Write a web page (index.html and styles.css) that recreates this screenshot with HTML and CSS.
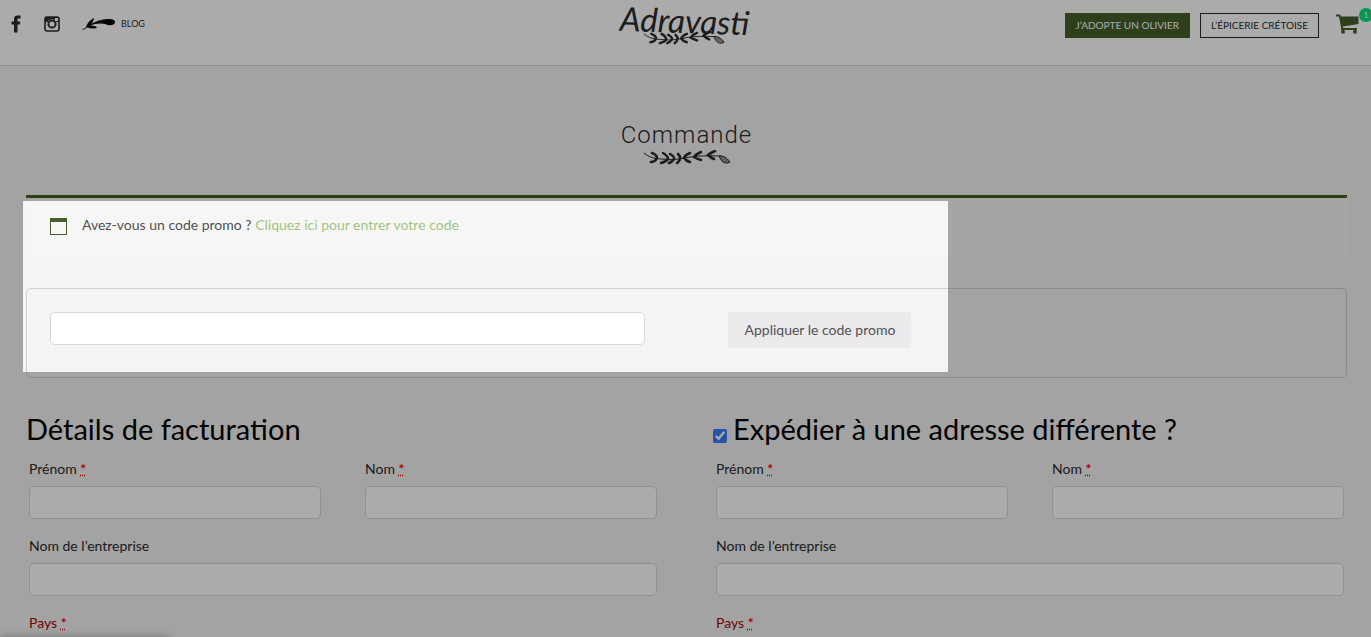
FILE: index.html
```
<!DOCTYPE html>
<html lang="fr">
<head>
  <meta charset="UTF-8">
  <meta name="viewport" content="width=device-width, initial-scale=1.0">
  <title>Commande - Adravasti</title>
  <link rel="stylesheet" href="styles.css">
</head>
<body>
  <svg class="sprite" aria-hidden="true">
    <symbol id="branch" viewBox="0 0 88 16">
      <path d="M1 3 Q8 9 18 9 Q30 11 42 8 T78 6" fill="none" stroke="currentColor" stroke-width="1"/>
      <g fill="none" stroke="currentColor" stroke-width="2.600" stroke-linecap="round">
        <path d="M9 3 Q14 5 14 8 Q12 12 8 12"/>
        <path d="M20 3 Q25 6 25 9 Q23 12 18 13"/>
        <path d="M27 4 Q32 7 31 9 Q29 12 26 13"/>
        <path d="M35 4 Q38 7 37 9 Q36 12 34 13"/>
        <path d="M47 3 Q42 5 41 8 Q43 11 47 12"/>
        <path d="M58 2 Q53 4 51 7 Q54 9 58 10"/>
        <path d="M72 1 Q67 3 65 5 Q68 8 71 9"/>
      </g>
      <path d="M76 6 Q82 5 87 12 Q82 15 78 10 Z" fill="currentColor" fill-opacity="0.5" stroke="currentColor"/>
    </symbol>
  </svg>

  <header class="header">
    <nav class="header-left">
      <a class="icon-link" href="#" aria-label="Facebook">
        <svg width="10" height="18" viewBox="0 0 10 18"><path d="M9.500 0.500V3.500H7.500Q6.500 3.500 6.500 4.500V6.500H9.300L9 9.500H6.500V17.500H3V9.500H0.500V6.500H3V4Q3 0.500 6.500 0.500Z" fill="currentColor"/></svg>
      </a>
      <a class="icon-link" href="#" aria-label="Instagram">
        <svg width="16" height="16" viewBox="0 0 16 16">
          <rect x="1" y="1" width="14" height="14" rx="2" fill="none" stroke="currentColor" stroke-width="1.600"/>
          <path d="M1 1H15V6H1Z" fill="currentColor"/>
          <rect x="11" y="2" width="3" height="3" fill="#fff"/>
          <circle cx="8" cy="8" r="4.800" fill="#fff"/>
          <circle cx="8" cy="8" r="3.600" fill="#fff" stroke="currentColor" stroke-width="2"/>
        </svg>
      </a>
      <a class="blog-link" href="#">
        <svg width="35" height="13" viewBox="0 0 35 13">
          <path d="M0.500 12Q6 9 8 7Q18 1 27 1Q35 1 34 5Q32 8 27 7Q18 4 9 7.500Q15 7 16 10Q12 11 6 9.500Q3 12 0.500 12Z" fill="#000"/>
          <path d="M5 9Q7 3 13 0Q13 5 6 9Z" fill="#000"/>
        </svg>
        BLOG
      </a>
    </nav>

    <a class="logo" href="#">
      <span class="logo-name">Adravasti</span>
      <svg class="logo-branch" width="82" height="15"><use href="#branch"/></svg>
    </a>

    <div class="header-right">
      <a class="btn btn-green" href="#">J’ADOPTE UN OLIVIER</a>
      <a class="btn btn-outline" href="#">L’ÉPICERIE CRÉTOISE</a>
      <a class="cart" href="#" aria-label="Panier">
        <svg width="23" height="20" viewBox="0 0 23 20">
          <path d="M0 0.500H4L5 2.500H22.500V10L7 12.500V14H21V16H5V13L3 2.500H0Z" fill="currentColor"/>
          <circle cx="7" cy="17.800" r="2" fill="currentColor"/>
          <circle cx="19" cy="17.800" r="2" fill="currentColor"/>
        </svg>
        <span class="cart-count">1</span>
      </a>
    </div>
  </header>

  <main class="checkout">
    <div class="page-title">
      <h1>Commande</h1>
      <svg width="88" height="16"><use href="#branch"/></svg>
    </div>

    <section class="coupon">
      <div class="notice">
        <svg width="17" height="17" viewBox="0 0 17 17">
          <rect x="0.500" y="0.500" width="16" height="16" fill="none" stroke="currentColor"/>
          <rect width="17" height="4" fill="currentColor"/>
        </svg>
        <p>Avez-vous un code promo ? <a href="#">Cliquez ici pour entrer votre code</a></p>
      </div>
      <form class="coupon-form">
        <input type="text" class="input-text" aria-label="Code promo">
        <button type="button" class="coupon-btn">Appliquer le code promo</button>
      </form>
      <div class="spotlight"></div>
    </section>

    <form class="columns">
      <section>
        <h3>Détails de facturation</h3>
        <div class="fields">
          <p class="field">
            <label for="b-first">Prénom <abbr title="obligatoire">*</abbr></label>
            <input type="text" class="input-text" id="b-first">
          </p>
          <p class="field">
            <label for="b-last">Nom <abbr title="obligatoire">*</abbr></label>
            <input type="text" class="input-text" id="b-last">
          </p>
          <p class="field wide">
            <label for="b-company">Nom de l’entreprise</label>
            <input type="text" class="input-text" id="b-company">
          </p>
          <p class="field wide invalid">
            <span>Pays <abbr title="obligatoire">*</abbr></span>
          </p>
        </div>
      </section>
      <section>
        <h3>
          <input type="checkbox" id="ship" checked>
          <label for="ship">Expédier à une adresse différente ?</label>
        </h3>
        <div class="fields">
          <p class="field">
            <label for="s-first">Prénom <abbr title="obligatoire">*</abbr></label>
            <input type="text" class="input-text" id="s-first">
          </p>
          <p class="field">
            <label for="s-last">Nom <abbr title="obligatoire">*</abbr></label>
            <input type="text" class="input-text" id="s-last">
          </p>
          <p class="field wide">
            <label for="s-company">Nom de l’entreprise</label>
            <input type="text" class="input-text" id="s-company">
          </p>
          <p class="field wide invalid">
            <span>Pays <abbr title="obligatoire">*</abbr></span>
          </p>
        </div>
      </section>
    </form>
  </main>
  <div class="corner-shadow"></div>
</body>
</html>
```
FILE: styles.css
```
:root {
  --green: #455e2b;
  --text: #2b2b2b;
}
* {
  box-sizing: border-box;
}
body {
  margin: 0;
  min-height: 100vh;
  background: #f4f4f4;
  color: var(--text);
  font-family: Lato, "Liberation Sans", sans-serif;
  font-size: 14px;
  line-height: 20px;
  overflow: hidden auto;
}
a {
  color: inherit;
  text-decoration: none;
}
h1, h3, p {
  margin: 0;
  font-weight: 400;
}
svg {
  display: block;
}
.sprite {
  position: absolute;
  width: 0;
  height: 0;
}

/* header */
.header {
  display: grid;
  grid-template-columns: 1fr auto 1fr;
  align-items: start;
  height: 66px;
  padding: 0 12px 0 11px;
  background: #fff;
  border-bottom: 1px solid #d8d8d8;
}
.header-left {
  display: flex;
  align-items: center;
  height: 48px;
}
.icon-link {
  margin-right: 23px;
}
.icon-link + .icon-link {
  margin-right: 21px;
}
.blog-link {
  display: flex;
  align-items: center;
  gap: 5px;
  font-size: 9px;
}
.logo {
  padding-top: 4px;
}
.logo-name {
  display: block;
  font-size: 33px;
  font-style: italic;
  line-height: 32px;
  transform: rotate(2deg);
}
.logo-branch {
  margin: -5px 0 0 23px;
}
.header-right {
  display: flex;
  justify-content: flex-end;
  padding-top: 13px;
}
.btn {
  height: 25px;
  margin-right: 10px;
  padding: 0 10px;
  border: 1px solid var(--green);
  font-size: 10px;
  line-height: 23px;
}
.btn-green {
  background: var(--green);
  color: #fff;
}
.btn-outline {
  margin-right: 17px;
  border-color: var(--text);
}
.cart {
  position: relative;
  padding-top: 1px;
  color: var(--green);
}
.cart-count {
  position: absolute;
  top: -5px;
  right: -14px;
  width: 14px;
  height: 14px;
  border-radius: 50%;
  background: #00e07f;
  color: #fff;
  font-size: 8px;
  line-height: 14px;
  text-align: center;
}

/* checkout */
.checkout {
  padding: 54px 24px 0 26px;
}
.page-title {
  display: flex;
  flex-direction: column;
  align-items: center;
  height: 75px;
}
.page-title h1 {
  font-family: Roboto, "Liberation Sans", sans-serif;
  font-size: 24px;
  font-weight: 300;
  letter-spacing: 1px;
  line-height: 30px;
}
.coupon {
  position: relative;
}
.notice {
  display: flex;
  align-items: center;
  gap: 15px;
  height: 61px;
  padding: 0 24px 4px;
  border-top: 3px solid var(--green);
  background: #f7f6f7;
  color: #515151;
}
.notice svg {
  margin-top: 3px;
  color: var(--green);
}
.notice a {
  color: #9fc680;
}
.coupon-form {
  display: grid;
  grid-template-columns: 47% auto;
  justify-content: start;
  align-items: start;
  gap: 83px;
  height: 90px;
  margin-top: 32px;
  padding: 23px 29px 23px 23px;
  border: 1px solid #d3ced2;
  border-radius: 5px;
}
.input-text {
  display: block;
  width: 100%;
  height: 33px;
  padding: 0 8px;
  border: 1px solid #d8d8d8;
  border-radius: 5px;
  background: #fff;
  font: inherit;
}
.coupon-btn {
  height: 36px;
  padding: 0 16px;
  border: 0;
  border-radius: 3px;
  background: #ebe9eb;
  color: #515151;
  font: inherit;
}
/* everything outside the promo code area is dimmed */
.spotlight {
  position: absolute;
  top: 6px;
  bottom: 6px;
  left: -3px;
  width: 70%;
  box-shadow: 0 0 0 9999px rgba(0, 0, 0, 0.33);
  pointer-events: none;
}
.columns {
  display: grid;
  grid-template-columns: 1fr 1fr;
  gap: 53px;
  padding-top: 32px;
}
.columns h3 {
  display: flex;
  align-items: center;
  gap: 6px;
  color: #000;
  font-size: 29px;
  line-height: 38px;
}
.columns h3 input {
  width: 14px;
  height: 14px;
  margin: 14px 0 0;
  accent-color: #3b7dfa;
}
.fields {
  display: grid;
  grid-template-columns: 1fr 1fr;
  gap: 16px 44px;
  padding: 10px 3px 0;
}
.field label, .field span {
  display: block;
  height: 28px;
  line-height: 22px;
}
.wide {
  grid-column: 1 / -1;
}
.invalid {
  height: 22px;
  color: #a00;
}
.field abbr {
  color: #f00;
  font-weight: 700;
  text-decoration: underline dotted;
}
.corner-shadow {
  position: fixed;
  bottom: -10px;
  left: 0;
  width: 170px;
  height: 10px;
  box-shadow: 0 0 8px rgba(0, 0, 0, 0.3);
}

@media (max-width: 800px) {
  .columns {
    grid-template-columns: 1fr;
  }
}
```
